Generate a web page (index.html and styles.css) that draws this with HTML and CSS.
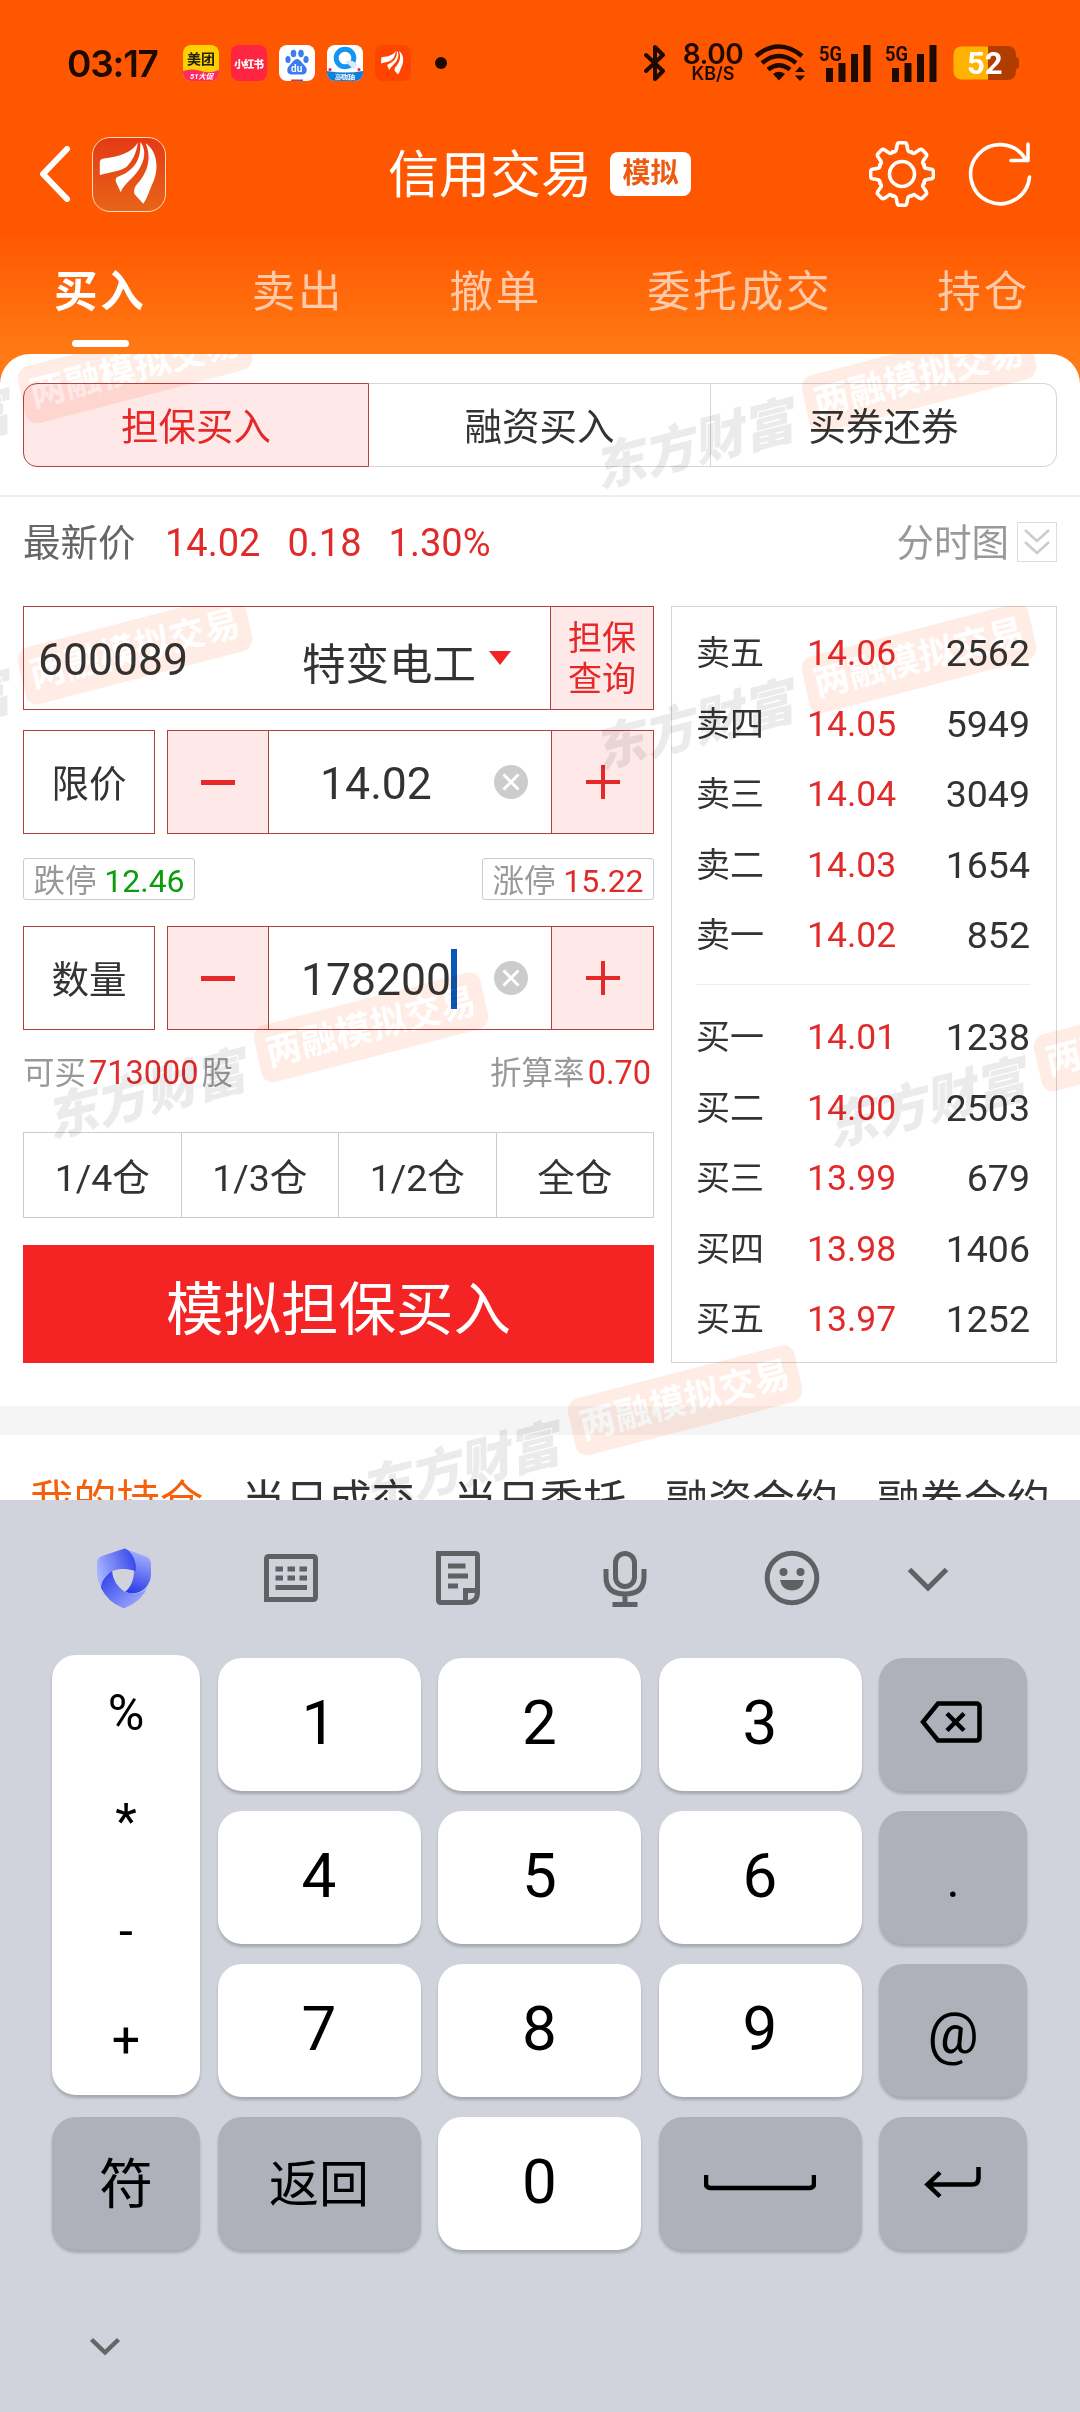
FILE: index.html
```html
<!DOCTYPE html>
<html lang="zh-CN">
<head>
    <meta charset="UTF-8">
    <meta name="viewport" content="width=device-width, initial-scale=1.0">
    <title>信用交易</title>
    <link rel="stylesheet" href="styles.css">
</head>
<body>
    <svg width="0" height="0" class="defs">
        <symbol id="feather" viewBox="0 0 74 74">
            <path d="M46 5 C40 15 26 20 11 21 Q7 21.5 7 25 V38 C18 35 28 34 34 30 C41 24 45 14 46 5Z"/>
            <path d="M48.5 4 C50 22 42 34 25 40 Q22 42 24 46 L28.5 55.7 C32 46 44 40 49 29 C54 20 54 10 48.5 4Z"/>
            <path d="M54 5.5 C66 13 68 32 62 45 C58 53 56 62 51.6 67.7 L43 58 Q41 54 44 49 C53 40 62 24 54 5.5Z"/>
        </symbol>
    </svg>

    <!-- Header -->
    <div class="header">
        <div class="status-bar">
            <span class="time">03:17</span>
            <div class="notice-icons">
                <svg viewBox="0 0 36 36">
                    <clipPath id="c1"><rect width="36" height="36" rx="8"/></clipPath>
                    <g clip-path="url(#c1)">
                        <rect width="36" height="36" fill="#ffd100"/>
                        <path d="M0 26 Q10 23 18 26 T36 25 V36 H0z" fill="#ff2a62"/>
                        <text x="4" y="19" font-size="14" font-weight="700" fill="#221">美团</text>
                        <text x="7" y="34" font-size="7.5" font-weight="700" font-style="italic" fill="#fff">51大促</text>
                    </g>
                </svg>
                <svg viewBox="0 0 36 36">
                    <rect width="36" height="36" rx="8" fill="#ff2442"/>
                    <text x="3" y="22.5" font-size="10.5" font-weight="900" fill="#fff" textLength="30">小红书</text>
                </svg>
                <svg viewBox="0 0 36 36">
                    <rect width="36" height="36" rx="8" fill="#fff"/>
                    <g fill="#3b7cf0">
                        <ellipse cx="14.5" cy="8.5" rx="2.8" ry="3.7"/>
                        <ellipse cx="22" cy="8.5" rx="2.8" ry="3.7"/>
                        <ellipse cx="9" cy="14.5" rx="2.6" ry="3.5"/>
                        <ellipse cx="27" cy="14.5" rx="2.6" ry="3.5"/>
                        <path d="M18 14 C21 14 23 18 26 21 C29 24 28 29 24 29.5 H12 C8 29 7 24 10 21 C13 18 15 14 18 14z"/>
                    </g>
                    <text x="12" y="27" font-size="10" font-weight="700" fill="#fff">du</text>
                    <path d="M12 34.5h6V36h-6z" fill="#e33"/><path d="M18 34.5h6V36h-6z" fill="#36d"/>
                </svg>
                <svg viewBox="0 0 36 36">
                    <clipPath id="c2"><rect width="36" height="36" rx="8"/></clipPath>
                    <g clip-path="url(#c2)">
                        <rect width="36" height="36" fill="#fff"/>
                        <circle cx="18" cy="13" r="8.8" fill="none" stroke="#1296f0" stroke-width="5"/>
                        <path d="M18 17 Q25 13 30 20 L27 24z" fill="#dbe9f8"/>
                        <path d="M0 26 Q18 29 36 26 V36 H0z" fill="#0d7fd8"/>
                        <text x="8" y="34" font-size="6" font-weight="700" fill="#fff" textLength="20">高考加油</text>
                        <circle cx="3" cy="24.5" r="1.5" fill="#e22"/><circle cx="32" cy="24.5" r="1.5" fill="#e22"/>
                    </g>
                </svg>
                <svg viewBox="0 0 36 36">
                    <rect width="36" height="36" rx="8" fill="#ff4400"/>
                    <use href="#feather" x="3.5" y="4" width="28" height="28" fill="#fff"/>
                </svg>
            </div>
            <span class="more-dot"></span>
            <div class="status-right">
                <svg class="bluetooth" viewBox="0 0 22 38"><path d="M2 11 L19 27 L11 35 V3 L19 11 L2 27"/></svg>
                <div class="speed"><span class="speed-num">8.00</span><span class="speed-unit">KB/S</span></div>
                <svg class="wifi" viewBox="0 0 52 38">
                    <path d="M2 12 Q25 -7 48 12 M8 19 Q25 5 42 19 M14 25.5 Q25 17 36 25.5"/>
                    <path class="solid" d="M19 30 Q25 25.5 31 30 L25 36.5z M41 28l5-5.500 5 5.500z M41 31.5l5 5.500 5-5.500z"/>
                </svg>
                <svg class="signal" viewBox="0 0 52 38">
                    <path d="M7 24h7v14h-7zM19.500 19h7v19h-7zM32 10h7v28h-7zM44.500 1h7v37h-7z"/>
                    <text x="0" y="17" font-size="21" font-weight="700" textLength="23" lengthAdjust="spacingAndGlyphs">5G</text>
                </svg>
                <svg class="signal" viewBox="0 0 52 38">
                    <path d="M7 24h7v14h-7zM19.500 19h7v19h-7zM32 10h7v28h-7zM44.500 1h7v37h-7z"/>
                    <text x="0" y="17" font-size="21" font-weight="700" textLength="23" lengthAdjust="spacingAndGlyphs">5G</text>
                </svg>
                <svg class="battery" viewBox="0 0 66 34">
                    <path d="M62 11 Q66 11 66 14 V20 Q66 23 62 23z" fill="#b03c00"/>
                    <path d="M35 0 H54 Q63 0 63 9 V25 Q63 34 54 34 H35z" fill="#b03c00"/>
                    <path d="M35 .5 H9 Q.5 .5 .5 9 V25 Q.5 33.5 9 33.5 H35z" fill="#ffb300"/>
                    <text x="14" y="28" font-size="31" font-weight="700" fill="#fff">52</text>
                </svg>
            </div>
        </div>

        <div class="title-bar">
            <svg class="back" viewBox="0 0 32 56"><path d="M28 3 L4 28 L28 53"/></svg>
            <div class="app-logo"><svg viewBox="0 0 74 74"><use href="#feather" width="74" height="74"/></svg></div>
            <h1 class="title">信用交易</h1>
            <span class="title-badge">模拟</span>
            <svg class="gear" viewBox="-33 -33 66 66">
                <path id="tooth" d="M-9.2 -22.2 Q-6 -21.5 -5.6 -25 L-4.8 -29.5 Q-4.2 -31.4 -2.4 -31.4 H2.4 Q4.2 -31.4 4.8 -29.5 L5.6 -25 Q6 -21.5 9.2 -22.2"/>
                <use href="#tooth" transform="rotate(45)"/>
                <use href="#tooth" transform="rotate(90)"/>
                <use href="#tooth" transform="rotate(135)"/>
                <use href="#tooth" transform="rotate(180)"/>
                <use href="#tooth" transform="rotate(225)"/>
                <use href="#tooth" transform="rotate(270)"/>
                <use href="#tooth" transform="rotate(315)"/>
                <circle r="12.5"/>
            </svg>
            <svg class="refresh" viewBox="0 0 66 66"><path d="M61.5 36 A29.5 29.5 0 1 1 58 19 M60 3 V19.5 H43"/></svg>
        </div>

        <div class="tabs">
            <span class="tab active">买入</span>
            <span class="tab">卖出</span>
            <span class="tab">撤单</span>
            <span class="tab">委托成交</span>
            <span class="tab">持仓</span>
        </div>
    </div>

    <!-- Trade sheet -->
    <div class="sheet">
        <div class="segment">
            <span class="segment-item active">担保买入</span>
            <span class="segment-item">融资买入</span>
            <span class="segment-item">买券还券</span>
        </div>

        <div class="quote">
            <span class="quote-label">最新价</span>
            <span class="red">14.02</span>
            <span class="red">0.18</span>
            <span class="red">1.30%</span>
            <span class="chart-link">分时图</span>
            <svg class="expand" viewBox="0 0 40 40"><rect x=".5" y=".5" width="39" height="39"/><path d="M8 8 L20 19 L32 8 M8 20 L20 31 L32 20"/></svg>
        </div>

        <div class="trade">
            <div class="form">
                <div class="stock field">
                    <span class="code">600089</span>
                    <span class="name">特变电工</span>
                    <span class="caret-down"></span>
                    <span class="query">担保<br>查询</span>
                </div>

                <div class="input-row price-row">
                    <span class="kind field">限价</span>
                    <div class="stepper field">
                        <span class="step"><i class="minus"></i></span>
                        <span class="value">14.02</span>
                        <svg class="clear" viewBox="0 0 34 34"><circle cx="17" cy="17" r="17"/><path d="M9.5 9.5 L24.5 24.5 M24.5 9.5 L9.5 24.5"/></svg>
                        <span class="step plus-step"><i class="minus plus"></i></span>
                    </div>
                </div>

                <div class="limits">
                    <span class="limit">跌停 <b class="green">12.46</b></span>
                    <span class="limit">涨停 <b class="red">15.22</b></span>
                </div>

                <div class="input-row">
                    <span class="kind field">数量</span>
                    <div class="stepper field">
                        <span class="step"><i class="minus"></i></span>
                        <span class="value">178200<i class="cursor"></i></span>
                        <svg class="clear" viewBox="0 0 34 34"><circle cx="17" cy="17" r="17"/><path d="M9.5 9.5 L24.5 24.5 M24.5 9.5 L9.5 24.5"/></svg>
                        <span class="step plus-step"><i class="minus plus"></i></span>
                    </div>
                </div>

                <div class="hints">
                    <span>可买<b class="red">713000</b>股</span>
                    <span>折算率<b class="red">0.70</b></span>
                </div>

                <div class="ratios">
                    <span>1/4仓</span>
                    <span>1/3仓</span>
                    <span>1/2仓</span>
                    <span>全仓</span>
                </div>

                <button class="submit-btn">模拟担保买入</button>
            </div>

            <div class="book">
                <div class="level"><span>卖五</span><span class="red">14.06</span><span class="qty">2562</span></div>
                <div class="level"><span>卖四</span><span class="red">14.05</span><span class="qty">5949</span></div>
                <div class="level"><span>卖三</span><span class="red">14.04</span><span class="qty">3049</span></div>
                <div class="level"><span>卖二</span><span class="red">14.03</span><span class="qty">1654</span></div>
                <div class="level"><span>卖一</span><span class="red">14.02</span><span class="qty">852</span></div>
                <div class="book-line"></div>
                <div class="level"><span>买一</span><span class="red">14.01</span><span class="qty">1238</span></div>
                <div class="level"><span>买二</span><span class="red">14.00</span><span class="qty">2503</span></div>
                <div class="level"><span>买三</span><span class="red">13.99</span><span class="qty">679</span></div>
                <div class="level"><span>买四</span><span class="red">13.98</span><span class="qty">1406</span></div>
                <div class="level"><span>买五</span><span class="red">13.97</span><span class="qty">1252</span></div>
            </div>
        </div>

        <div class="band"></div>
        <div class="list-tabs">
            <span class="active">我的持仓</span>
            <span>当日成交</span>
            <span>当日委托</span>
            <span>融资合约</span>
            <span>融券合约</span>
        </div>

        <!-- Watermark layer over the sheet -->
        <div class="watermarks">
            <div class="mark m1"><span class="brand">东方财富</span><span class="pill">两融模拟交易</span></div>
            <div class="mark m2"><span class="brand">东方财富</span><span class="pill">两融模拟交易</span></div>
            <div class="lower">
                <div class="mark m3"><span class="brand">东方财富</span><span class="pill">两融模拟交易</span></div>
                <div class="mark m4"><span class="brand">东方财富</span><span class="pill">两融模拟交易</span></div>
                <div class="mark m5"><span class="brand">东方财富</span><span class="pill">两融模拟交易</span></div>
                <div class="mark m6"><span class="brand">东方财富</span><span class="pill">两融模拟交易</span></div>
                <div class="mark m7"><span class="brand">东方财富</span><span class="pill">两融模拟交易</span></div>
            </div>
        </div>
    </div>

    <!-- Keyboard -->
    <div class="keyboard">
        <div class="toolbar">
            <svg viewBox="0 0 60 60">
                <defs>
                    <linearGradient id="g1" x1="0" y1=".6" x2="1" y2=".3"><stop offset="0" stop-color="#a9b6ff"/><stop offset="1" stop-color="#3446ea"/></linearGradient>
                    <linearGradient id="g2" x1=".5" y1="0" x2=".3" y2="1"><stop offset="0" stop-color="#a9b6ff"/><stop offset="1" stop-color="#2b3be8"/></linearGradient>
                    <linearGradient id="g3" x1="0" y1="0" x2="1" y2=".8"><stop offset="0" stop-color="#2b3be8"/><stop offset="1" stop-color="#a2b0ff"/></linearGradient>
                </defs>
                <path d="M32 1 L53 9 Q57 11 57 16 V26 C57 40 44 49 31 44 C39 38 46 20 32 1z" fill="url(#g2)"/>
                <path d="M29 1 L8 8 Q3 10 3 15 V25 Q3 33 7 39 C9 28 18 16 42 23 C43 14 38 4 32 1 Q30 0 29 1z" fill="url(#g1)"/>
                <path d="M18 23 C9 29 7 36 7 40 Q14 54 28 59.500 Q30 60.500 32 59.500 Q48 53 54 38 C50 45 41 47 31 44 Q19 36 18 23z" fill="url(#g3)"/>
            </svg>
            <svg viewBox="0 0 60 60">
                <path d="M5.5 51.5 V11 Q5.5 8.5 8 8.5 H52 Q54.5 8.5 54.5 11 V49 Q54.5 51.5 52 51.5z"/>
                <path d="M14.5 21h7.500M26.5 21h7.500M38.5 21h7.500M14.5 30h7.500M26.5 30h7.500M38.5 30h7.500M14.5 39.5h31.500"/>
            </svg>
            <svg viewBox="0 0 60 60">
                <path d="M10.5 5.5 H47 Q49.5 5.5 49.5 8 V44 Q49.5 54.5 39 54.5 H13 Q10.5 54.5 10.5 52z M37.5 54 V42.5 H49"/>
                <path d="M20 18h17.500M20 28h20M20 38h10"/>
            </svg>
            <svg viewBox="0 0 60 60">
                <rect x="20.5" y="5.5" width="19" height="33" rx="9.5"/>
                <path d="M11 21 V29 Q11 46 30 46 Q49 46 49 29 V21 M30 46 V56 M17.5 56.5 H42.5"/>
            </svg>
            <svg viewBox="0 0 60 60">
                <circle cx="30" cy="30" r="24.8"/>
                <circle class="solid" cx="21.5" cy="24" r="4"/><circle class="solid" cx="38.5" cy="24" r="4"/>
                <path class="solid" d="M18 32 H42 Q40 42.5 30 42.5 Q20 42.5 18 32z"/>
            </svg>
            <svg class="fold" viewBox="0 0 60 60"><path d="M11.5 21.5 L30 40 L48.5 21.5"/></svg>
        </div>

        <div class="keys">
            <div class="symbols">
                <span>%</span>
                <span>*</span>
                <span>-</span>
                <span>+</span>
            </div>
            <span class="key">1</span>
            <span class="key">2</span>
            <span class="key">3</span>
            <span class="key dark del">
                <svg width="66" height="46" viewBox="0 0 66 46"><path d="M5 23 L20 4.500 H58 Q61.500 4.500 61.500 8 V38 Q61.500 41.500 58 41.500 H20z M29 14.500 L46 31.500 M46 14.500 L29 31.500"/></svg>
            </span>
            <span class="key">4</span>
            <span class="key">5</span>
            <span class="key">6</span>
            <span class="key dark dot">.</span>
            <span class="key">7</span>
            <span class="key">8</span>
            <span class="key">9</span>
            <span class="key dark at">@</span>
            <span class="key dark sym">符</span>
            <span class="key dark ret">返回</span>
            <span class="key">0</span>
            <span class="key dark">
                <svg width="112" height="20" viewBox="0 0 112 20"><path d="M2 3 V12 Q2 16 7 16 H105 Q110 16 110 12 V3"/></svg>
            </span>
            <span class="key dark">
                <svg width="60" height="36" viewBox="0 0 60 36"><path d="M55.500 3 V14 Q55.500 20.500 49 20.500 H4 M17 8.500 L4.500 20.500 L17 32.500"/></svg>
            </span>
        </div>

        <svg class="hide-keyboard" viewBox="0 0 32 20"><path d="M2.5 2.5 L16 15.5 L29.5 2.5"/></svg>
    </div>
</body>
</html>
```

FILE: styles.css
```css
* {
    margin: 0;
    padding: 0;
    box-sizing: border-box;
}

body {
    width: 1080px;
    height: 2412px;
    overflow: hidden;
    display: flex;
    flex-direction: column;
    font-family: Roboto, "Noto Sans CJK SC", sans-serif;
    background: #ff7a14;
    color: #333;
}

b {
    font-weight: normal;
}

.defs {
    position: absolute;
}

.red {
    color: #e12a2a;
}

.green {
    color: #0c9c0c;
}

/* Header */
.header {
    height: 354px;
    flex: none;
    background: linear-gradient(#ff5600 0, #ff5600 230px, #ff7a14 354px);
}

.status-bar {
    height: 124px;
    display: flex;
    align-items: center;
    padding: 2px 61px 0 67px;
    color: #1e0a00;
    fill: #1e0a00;
}

.time {
    width: 116px;
    font-family: Inter, sans-serif;
    font-size: 37px;
    font-weight: 600;
    letter-spacing: -1.2px;
}

.notice-icons {
    display: flex;
    gap: 12px;
}

.notice-icons svg {
    width: 36px;
    height: 36px;
}

.more-dot {
    width: 12px;
    height: 12px;
    margin-left: 24px;
    border-radius: 50%;
    background: #1e0a00;
}

.status-right {
    margin-left: auto;
    display: flex;
    align-items: center;
}

.bluetooth {
    width: 22px;
    height: 38px;
    margin-right: 18px;
    fill: none;
    stroke: #1e0a00;
    stroke-width: 4;
    stroke-linejoin: round;
    stroke-linecap: round;
}

.speed {
    width: 58px;
    margin-right: 12px;
    display: flex;
    flex-direction: column;
    align-items: center;
    font-family: Inter, sans-serif;
    font-weight: 600;
}

.speed-num {
    font-size: 28px;
    line-height: 22px;
    letter-spacing: -0.5px;
}

.speed-unit {
    font-size: 18px;
    line-height: 18px;
}

.wifi {
    width: 52px;
    height: 38px;
    margin-right: 13px;
    fill: none;
    stroke: #1e0a00;
    stroke-width: 4.5;
}

.wifi .solid {
    fill: #1e0a00;
    stroke: none;
}

.signal {
    width: 52px;
    height: 38px;
    margin-right: 14px;
}

.battery {
    width: 66px;
    height: 34px;
    margin-left: 2px;
}

.title-bar {
    height: 100px;
    display: flex;
    align-items: center;
    padding: 0 46px 0 39px;
}

.back {
    width: 32px;
    height: 56px;
    fill: none;
    stroke: #fff;
    stroke-width: 6;
    stroke-linecap: round;
    stroke-linejoin: round;
}

.app-logo {
    width: 74px;
    height: 75px;
    margin-left: 21px;
    border: 1px solid #ffd9c4;
    border-radius: 18px;
    background: linear-gradient(#e53a14, #e86418);
    fill: #fff;
}

.title {
    width: 206px;
    margin-left: 222px;
    font-size: 51px;
    font-weight: normal;
    line-height: 70px;
    color: #fff;
    padding-top: 4px;
}

.title-badge {
    width: 81px;
    height: 44px;
    margin-left: 16px;
    border-radius: 8px;
    background: #fff;
    color: #ee5a10;
    font-size: 28px;
    font-weight: bold;
    line-height: 44px;
    text-align: center;
}

.gear {
    width: 66px;
    height: 66px;
    margin-left: auto;
}

.refresh {
    width: 66px;
    height: 66px;
    margin-left: 33px;
}

.gear,
.refresh {
    fill: none;
    stroke: #fff;
    stroke-width: 3.6;
    stroke-linecap: round;
    stroke-linejoin: round;
}

.tabs {
    display: flex;
    justify-content: space-between;
    padding: 36px 50px 0 54px;
}

.tab {
    font-size: 43.5px;
    line-height: 66px;
    letter-spacing: 2.8px;
    color: rgba(255, 255, 255, 0.65);
}

.tab.active {
    display: flex;
    flex-direction: column;
    align-items: center;
    font-weight: bold;
    color: #fff;
}

.tab.active::after {
    content: "";
    width: 57px;
    height: 7px;
    margin-top: 14px;
    border-radius: 4px;
    background: #fff;
}

/* Sheet */
.sheet {
    position: relative;
    height: 1146px;
    flex: none;
    overflow: hidden;
    border-radius: 30px 30px 0 0;
    background: #fff;
}

.segment {
    display: flex;
    height: 84px;
    margin: 29px 23px 28px;
}

.segment-item {
    width: 342px;
    border: 1px solid #d5d5d5;
    border-left: none;
    font-size: 37.5px;
    line-height: 86px;
    text-align: center;
}

.segment-item.active {
    width: 346px;
    border: 1px solid #b84040;
    border-radius: 14px 0 0 14px;
    background: #fee8e8;
    color: #e62828;
}

.segment-item:last-child {
    width: 346px;
    border-radius: 0 14px 14px 0;
}

.quote {
    height: 111px;
    display: flex;
    align-items: center;
    padding: 0 23px 17px;
    border-top: 2px solid #eee;
    font-size: 37.5px;
    line-height: 60px;
}

.quote .red {
    margin-right: 27px;
    font-size: 38px;
}

.quote-label {
    width: 142px;
    color: #666;
}

.chart-link {
    margin-left: auto;
    margin-right: 8px;
    color: #999;
}

.expand {
    width: 40px;
    height: 40px;
    margin-top: -3px;
    fill: none;
    stroke: #ccc;
    stroke-width: 2.5;
}

.expand rect {
    stroke: #ddd;
    stroke-width: 1;
}

.trade {
    display: flex;
    justify-content: space-between;
    padding: 0 23px;
    height: 757px;
}

.form {
    width: 631px;
}

.field {
    border: 1px solid #b04040;
}

.stock {
    height: 104px;
    display: flex;
    align-items: center;
    padding-left: 14px;
    font-size: 43.5px;
}

.code {
    width: 264px;
    padding-top: 4px;
    font-size: 44.5px;
}

.name {
    padding-top: 6px;
}

.caret-down {
    margin-left: 13px;
    border: 11px solid transparent;
    border-top: 14px solid #f22424;
    border-bottom: none;
}

.query {
    width: 103px;
    height: 102px;
    margin-left: auto;
    padding-top: 11px;
    border-left: 1px solid #b04040;
    background: #fee8e8;
    color: #e62828;
    font-size: 34px;
    line-height: 41px;
    text-align: center;
}

.input-row {
    display: flex;
    gap: 12px;
    height: 104px;
}

.price-row {
    margin-top: 20px;
}

.kind {
    width: 132px;
    font-size: 37.5px;
    line-height: 106px;
    text-align: center;
}

.stepper {
    width: 487px;
    display: flex;
    align-items: center;
}

.step {
    width: 101px;
    height: 102px;
    display: flex;
    align-items: center;
    justify-content: center;
    border-right: 1px solid #b04040;
    background: #fee8e8;
}

.plus-step {
    width: 102px;
    margin-left: auto;
    border-right: none;
    border-left: 1px solid #b04040;
}

.minus {
    width: 34px;
    height: 5px;
    background: #e62828;
}

.plus {
    background: linear-gradient(#e62828, #e62828) center / 34px 4px no-repeat,
        linear-gradient(#e62828, #e62828) center / 4px 34px no-repeat;
    height: 34px;
}

.value {
    width: 214px;
    display: flex;
    align-items: center;
    justify-content: center;
    font-size: 44.5px;
    line-height: 98px;
    padding-top: 4px;
}

.cursor {
    width: 6px;
    height: 60px;
    margin: -3px -6px 0 0;
    background: #0b57b8;
}

.clear {
    width: 34px;
    height: 34px;
    margin-left: 11px;
    fill: #ccc;
    stroke: #fff;
    stroke-width: 3;
}

.clear circle {
    stroke: none;
}

.limits {
    display: flex;
    justify-content: space-between;
    height: 42px;
    margin: 24px 0 26px;
}

.limit {
    width: 172px;
    border: 1px solid #ccc;
    border-radius: 3px;
    color: #999;
    font-size: 31.5px;
    line-height: 44px;
    text-align: center;
    white-space: nowrap;
}

.limit b {
    font-size: 32px;
}

.hints {
    display: flex;
    justify-content: space-between;
    height: 102px;
    padding: 22px 0 0 0;
    color: #999;
    font-size: 31.5px;
    line-height: 42px;
}

.hints b {
    margin: 0 3px 0 3px;
    font-size: 32.5px;
}

.ratios {
    display: flex;
    height: 86px;
    border: 1px solid #ccc;
}

.ratios span {
    flex: 1;
    font-size: 37.5px;
    line-height: 90px;
    text-align: center;
}

.ratios span + span {
    border-left: 1px solid #ccc;
}

.submit-btn {
    width: 100%;
    height: 118px;
    margin-top: 27px;
    padding-top: 1px;
    border: none;
    background: #f42424;
    color: #fff;
    font-family: inherit;
    font-size: 57.5px;
}

/* Order book */
.book {
    width: 386px;
    padding: 11px 26px 0 24px;
    border: 1px solid #d5d5d5;
}

.level {
    display: flex;
    height: 70.6px;
    font-size: 34px;
    line-height: 70.6px;
}

.level .red {
    margin-left: 43px;
    font-size: 35.5px;
}

.level .qty {
    margin-left: auto;
    font-size: 37.5px;
}

.book-line {
    height: 1px;
    margin: 13px 0 17px;
    background: #eee;
}

.band {
    height: 29px;
    margin-top: 43px;
    background: #f5f5f5;
}

.list-tabs {
    display: flex;
    justify-content: space-between;
    padding: 37px 30px 0;
    font-size: 43.3px;
    line-height: 60px;
}

.list-tabs .active {
    color: #f4600c;
}

/* Watermark: multiplied so the text under it stays readable */
.watermarks,
.lower {
    position: absolute;
    inset: 0;
    overflow: hidden;
    pointer-events: none;
}

.watermarks {
    background: #fff;
    mix-blend-mode: multiply;
}

.lower {
    clip-path: inset(252px 0 0 0);
}

.mark {
    position: absolute;
    width: 450px;
    height: 60px;
    display: flex;
    align-items: center;
    justify-content: space-between;
    transform: translate(-50%, -50%) rotate(-14.5deg);
    white-space: nowrap;
}

.brand {
    font-size: 51px;
    font-weight: 900;
    line-height: 60px;
    color: #ebebeb;
    transform: skewX(-14deg);
}

.pill {
    width: 234px;
    height: 58px;
    margin-top: -20px;
    border-radius: 12px;
    background: #ffece4;
    color: #fff;
    font-size: 36px;
    font-weight: bold;
    line-height: 58px;
    text-align: center;
    transform: skewX(-2deg);
}

.m1 { left: 33px; top: 51px; }
.m2 { left: 817px; top: 60px; }
.m3 { left: 33px; top: 332px; }
.m4 { left: 817px; top: 341px; }
.m5 { left: 269px; top: 710px; }
.m6 { left: 1049px; top: 719px; }
.m7 { left: 583px; top: 1083px; }

/* Keyboard */
.keyboard {
    flex: 1;
    background: #d0d3db;
}

.toolbar {
    display: flex;
    height: 155px;
    align-items: center;
    padding-left: 40px;
}

.toolbar svg {
    width: 60px;
    height: 60px;
    margin: 0 53.5px;
    flex: none;
    fill: none;
    stroke: #5f6164;
    stroke-width: 5;
}

.toolbar svg:first-child {
    stroke: none;
}

.toolbar .solid {
    fill: #5f6164;
    stroke: none;
}

.toolbar .fold {
    margin-left: 23px;
}

.keys {
    display: grid;
    grid-template-columns: 148px 203px 203px 203px 148px;
    grid-template-rows: repeat(4, 133px);
    gap: 20px 17.5px;
    padding: 3px 0 0 52px;
}

.symbols {
    grid-row: span 3;
    margin: -3px 0 2px;
    display: flex;
    flex-direction: column;
    justify-content: space-between;
    padding: 23px 0 20px;
    font-size: 50px;
    line-height: 70px;
    text-align: center;
}

.symbols,
.key {
    border-radius: 24px;
    background: #fff;
    color: #000;
    box-shadow: 0 3px 3px rgba(0, 0, 0, 0.2);
}

.key {
    display: flex;
    align-items: center;
    justify-content: center;
    padding-bottom: 4px;
    font-size: 62px;
}

.key.dark {
    background: #aeb1ba;
}

.key svg {
    fill: none;
    stroke: #000;
    stroke-width: 4.5;
}

.key.del {
    padding: 0 5px 6px 0;
}

.key.dot {
    padding-top: 8px;
    font-size: 50px;
}

.key.at {
    padding-top: 10px;
    font-size: 57px;
}

.key.sym {
    padding-bottom: 6px;
    font-size: 54px;
}

.key.ret {
    padding-bottom: 8px;
    font-size: 50px;
}

.hide-keyboard {
    display: block;
    width: 32px;
    height: 20px;
    margin: 87px 0 0 89px;
    fill: none;
    stroke: #666;
    stroke-width: 4.5;
}
```
